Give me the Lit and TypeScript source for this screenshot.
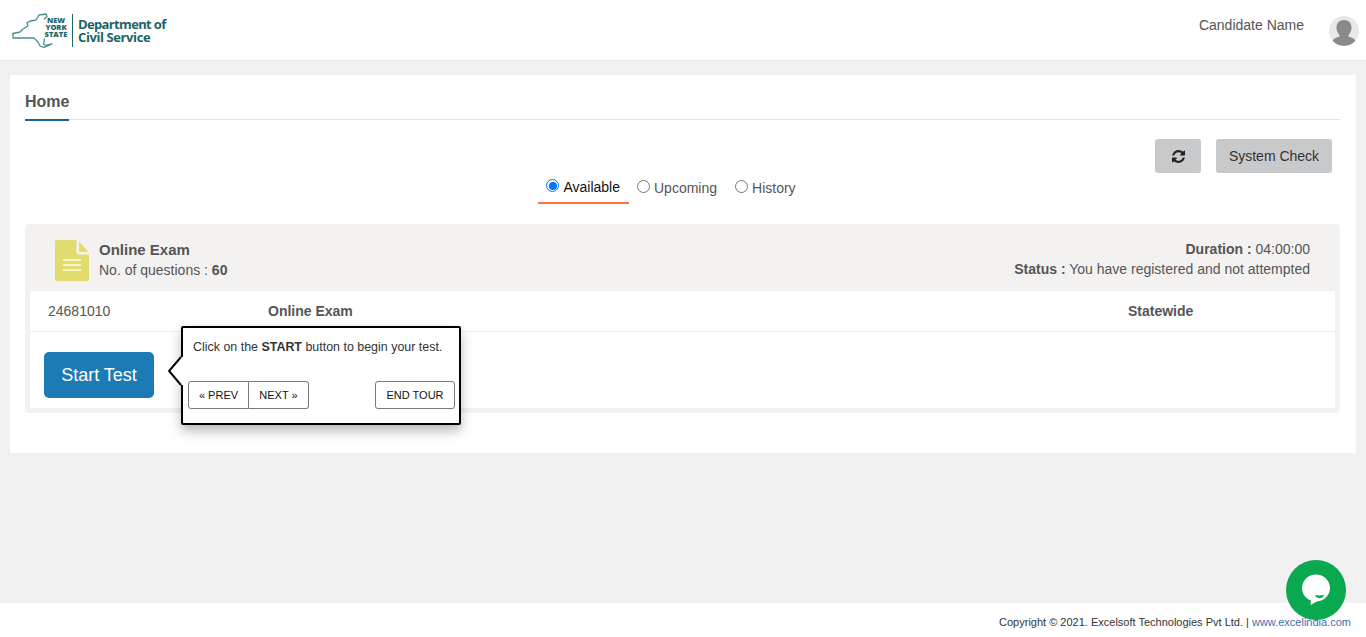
import { LitElement, html, css } from "lit";
import { customElement } from "lit/decorators.js";

@customElement("app-root")
export class AppRoot extends LitElement {
  static styles = css`
    :host {
      display: flex;
      flex-direction: column;
      height: 637px;
      overflow: hidden;
      position: relative;
      background: #f1f1f1;
      font-family: "Liberation Sans", Arial, sans-serif;
      font-size: 14px;
      color: #555;
    }
    .top {
      height: 60px;
      flex: none;
      background: #fff;
      border-bottom: 1px solid #e6e6e6;
      display: flex;
      align-items: center;
      justify-content: space-between;
      padding: 0 7px 0 12px;
    }
    .logo { display: flex; align-items: center; height: 60px; color: #1b6468; }
    .ny { position: relative; width: 60px; height: 36px; }
    .ny svg { display: block; }
    .ny-text {
      position: absolute; left: 31px; top: 5px; width: 26px;
      font: 800 7.5px/6.8px "Open Sans", "Liberation Sans", sans-serif; text-align: center;
    }
    .rule { width: 1px; height: 33px; background: #1b6468; margin-right: 5px; }
    .dept { font: 700 13px/13px "Open Sans", sans-serif; letter-spacing: -0.65px; margin-top: 2px; }
    .dept .l2 { letter-spacing: -0.4px; }
    .user { display: flex; align-items: center; gap: 25px; margin-top: -1px; color: #555; }
    .user span { margin-bottom: 10px; }
    .user svg { display: block; margin-top: 3px; }
    .main {
      margin: 14px 10px 0;
      height: 378px;
      flex: none;
      background: #fff;
      padding: 15px 16px 0 15px;
      box-sizing: border-box;
    }
    .title { height: 29px; border-bottom: 1px solid #e2e2e2; display: flex; align-items: flex-start; }
    .title span {
      display: block; height: 29px;
      font-weight: 700; font-size: 16px; line-height: 24px; color: #555;
      border-bottom: 2px solid #1a6496;
    }
    .actions { display: flex; justify-content: flex-end; gap: 15px; padding: 19px 8px 0 0; }
    .btn {
      height: 34px; border-radius: 3px; background: #c8c9ca; border: 0;
      display: flex; align-items: center; justify-content: center;
      font: 14px "Liberation Sans", sans-serif; color: #333; padding: 0;
    }
    .refresh { width: 46px; }
    .syscheck { width: 116px; }
    .tabs { display: flex; justify-content: center; margin: -1px 0 0 -1px; height: 32px; padding-right: 22px; }
    .tab {
      display: flex; align-items: center; gap: 4px; padding: 1px 8px 0;
      height: 29px; color: #555;
    }
    .tab.hist { padding-left: 10px; }
    .tab.on { color: #111; border-bottom: 2px solid #ff7043; padding: 0 9px 1px 8px; }
    .radio {
      width: 13px; height: 13px; border-radius: 50%; box-sizing: border-box;
      border: 1px solid #767676; background: #fff; flex: none; margin-top: -2px;
    }
    .radio.on { border: 1.5px solid #0075ff; position: relative; }
    .radio.on::after {
      content: ""; position: absolute; inset: 1.5px; border-radius: 50%; background: #0075ff;
    }
    .exam {
      margin-top: 20px; background: #f3f2f1; border-radius: 4px;
      padding: 0 5px 5px; height: 189px; box-sizing: border-box;
      display: flex; flex-direction: column;
    }
    .exam-head {
      height: 67px; flex: none; display: flex; align-items: flex-start; box-sizing: border-box;
      justify-content: space-between; padding: 16px 25px 0 25px;
    }
    .exam-left { display: flex; gap: 10px; }
    .exam-left svg { display: block; }
    .exam-name { font-weight: 700; font-size: 15px; line-height: 20px; }
    .line { line-height: 20px; }
    .exam-right { text-align: right; line-height: 20px; margin-top: -1px; }
    b { font-weight: 700; }
    .exam-body { flex: 1; background: #fff; display: flex; flex-direction: column; }
    .row {
      height: 40px; flex: none; border-bottom: 1px solid #eee;
      display: grid; grid-template-columns: 220px 860px 1fr; align-items: center;
      padding-left: 18px;
    }
    .start-wrap { padding: 20px 0 0 14px; }
    .start {
      width: 110px; height: 46px; border-radius: 5px; border: 0; background: #1c7ab5;
      color: #fff; font: 18px "Liberation Sans", sans-serif; padding: 0;
    }
    .tour {
      position: absolute; left: 181px; top: 326px; width: 280px; height: 99px;
      box-sizing: border-box; background: #fff; border: 2px solid #000;
      border-radius: 2px;
      box-shadow: 0 6px 12px rgba(0,0,0,.28);
      font-size: 12.45px; color: #333;
    }
    .tour-text { padding: 12px 0 0 10px; line-height: 15px; }
    .tour-arrow { position: absolute; left: -15px; top: 28px; width: 15px; height: 30px; }
    .tour-arrow svg { display: block; }
    .tour-btns {
      position: absolute; left: 5px; right: 4px; top: 53px;
      display: flex; justify-content: space-between;
    }
    .group { display: flex; }
    .tb {
      height: 28px; box-sizing: border-box; border: 1px solid #7a7a7a; background: #fff;
      font: 11px "Liberation Sans", sans-serif; color: #111; padding: 0; border-radius: 3px;
      display: flex; align-items: center; justify-content: center;
    }
    .prev { width: 61px; border-radius: 3px 0 0 3px; }
    .next { width: 60px; border-left: 0; border-radius: 0 3px 3px 0; }
    .end { width: 80px; }
    .spacer { flex: 1; }
    .foot {
      height: 34px; flex: none; background: #fff; display: flex; align-items: center;
      justify-content: flex-end; padding-right: 15px; font-size: 11px; color: #333;
      padding-top: 4px; box-sizing: border-box;
    }
    .foot a { color: #3d6fb0; text-decoration: none; }
    .chat {
      position: absolute; left: 1286px; top: 560px; width: 60px; height: 60px;
      border-radius: 50%; background: #0aa84f; display: flex; align-items: center; justify-content: center;
    }
    .chat svg { display: block; }
  `;

  render() {
    return html`
      <header class="top">
        <div class="logo">
          <div class="ny">
            <svg width="60" height="36" viewBox="12 12 60 36" fill="none" stroke="#4a8d90" stroke-width="1.300" stroke-linejoin="round" stroke-linecap="round">
              <path d="M13 33.500 L20 32 L23 29 L28 26 L27 23 L30 21 L36 20 L38 17 L39 15 L46 14 L47 16.500 L44.500 19" />
              <path d="M13 33.500 L13 38 L34 38 L38 42 L40 46 L44 47.300 L52 44 L46 45.500 L43.500 44.500 L44.500 39" />
            </svg>
            <div class="ny-text">NEW<br />YORK<br />STATE</div>
          </div>
          <div class="rule"></div>
          <div class="dept">Department of<br /><span class="l2">Civil Service</span></div>
        </div>
        <div class="user">
          <span>Candidate Name</span>
          <svg width="30" height="30" viewBox="0 0 30 30">
            <defs><clipPath id="av"><circle cx="15" cy="15" r="15" /></clipPath></defs>
            <circle cx="15" cy="15" r="15" fill="#e8e8e8" />
            <g clip-path="url(#av)" fill="#8a8a8a">
              <path d="M15 4c4.500 0 7.500 3 7.500 7.500 0 3.200-1.300 5.800-3 7.500v1.500c2.500 1 5.500 1.800 7 4V30H3.500v-5.500c1.500-2.200 4.500-3 7-4V19c-1.700-1.700-3-4.300-3-7.500C7.500 7 10.500 4 15 4z" />
            </g>
          </svg>
        </div>
      </header>

      <main class="main">
        <div class="title"><span>Home</span></div>
        <div class="actions">
          <button class="btn refresh">
            <svg width="13" height="13" viewBox="128 128 1536 1536" fill="#222">
              <path d="M1639 1056q0 5-1 7-64 268-268 434.500t-478 166.500q-146 0-282.500-55t-243.500-157l-129 129q-19 19-45 19t-45-19-19-45v-448q0-26 19-45t45-19h448q26 0 45 19t19 45-19 45l-137 137q71 66 161 102t187 36q134 0 250-65t186-179q11-17 53-117 8-23 30-23h192q13 0 22.500 9.500t9.500 22.500zm25-800v448q0 26-19 45t-45 19h-448q-26 0-45-19t-19-45 19-45l138-138q-148-137-349-137-134 0-250 65t-186 179q-11 17-53 117-8 23-30 23h-199q-13 0-22.500-9.500t-9.500-22.500v-7q65-268 270-434.500t480-166.500q146 0 284 55.500t245 156.500l130-129q19-19 45-19t45 19 19 45z" />
            </svg>
          </button>
          <button class="btn syscheck">System Check</button>
        </div>
        <div class="tabs">
          <div class="tab on"><span class="radio on"></span>Available</div>
          <div class="tab"><span class="radio"></span>Upcoming</div>
          <div class="tab hist"><span class="radio"></span>History</div>
        </div>
        <section class="exam">
          <div class="exam-head">
            <div class="exam-left">
              <svg width="34" height="41" viewBox="0 0 34 41">
                <path d="M1.500 0H21.500v12.500a2 2 0 0 0 2 2H34V39.500a1.500 1.500 0 0 1-1.500 1.500H1.500A1.500 1.500 0 0 1 0 39.500V1.500A1.500 1.500 0 0 1 1.500 0z" fill="#e2dc70" />
                <path d="M24 1.500L33.500 12H24z" fill="#e2dc70" />
                <path d="M8 20h18M8 25h18M8 30h18" stroke="#f6f3c8" stroke-width="2" />
              </svg>
              <div>
                <div class="exam-name">Online Exam</div>
                <div class="line">No. of questions : <b>60</b></div>
              </div>
            </div>
            <div class="exam-right">
              <div><b>Duration :</b> 04:00:00</div>
              <div><b>Status :</b> You have registered and not attempted</div>
            </div>
          </div>
          <div class="exam-body">
            <div class="row">
              <span>24681010</span>
              <b>Online Exam</b>
              <b>Statewide</b>
            </div>
            <div class="start-wrap"><button class="start">Start Test</button></div>
          </div>
        </section>
      </main>

      <div class="spacer"></div>
      <footer class="foot">
        <span>Copyright © 2021. Excelsoft Technologies Pvt Ltd. | <a href="#">www.excelindia.com</a></span>
      </footer>

      <div class="tour">
        <div class="tour-arrow">
          <svg width="15" height="30" viewBox="0 0 15 30">
            <path d="M15 1 L13 1 L1 15 L13 29 L15 29z" fill="#fff" />
            <path d="M13 1 L1 15 L13 29" fill="none" stroke="#000" stroke-width="2" />
          </svg>
        </div>
        <div class="tour-text">Click on the <b>START</b> button to begin your test.</div>
        <div class="tour-btns">
          <div class="group">
            <button class="tb prev">« PREV</button>
            <button class="tb next">NEXT »</button>
          </div>
          <button class="tb end">END TOUR</button>
        </div>
      </div>

      <div class="chat">
        <svg width="32" height="36" viewBox="0 0 32 36">
          <path d="M16 2.500C8.300 2.500 2 8.600 2 16c0 5.800 3.700 10.600 9 12.500L10.500 33l6.500-3.500C24.200 29 30 23.200 30 16 30 8.600 23.700 2.500 16 2.500z" fill="#fff" />
          <path d="M15 23c3 .7 6 .6 9-.2-.6 2.400-2 3.400-4.200 3.400-2.200 0-4-1-4.800-3.200z" fill="#0aa84f" />
        </svg>
      </div>
    `;
  }
}
